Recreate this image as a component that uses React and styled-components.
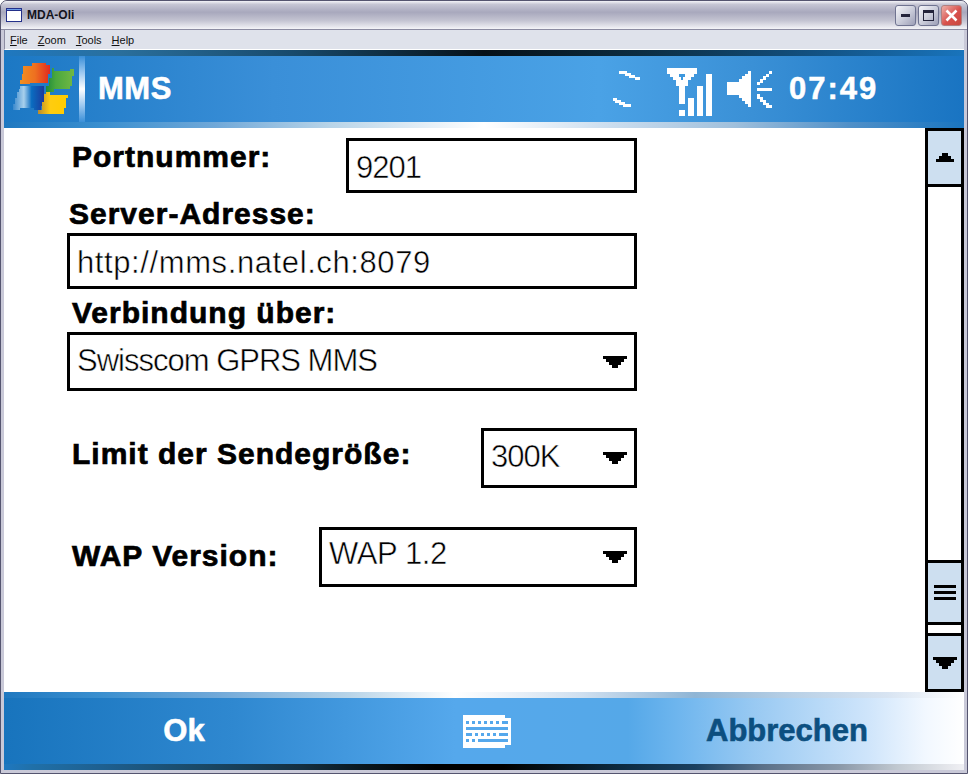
import styled, { createGlobalStyle } from "styled-components";

const Global = createGlobalStyle`
  html, body { margin: 0; padding: 0; background: #fff; }
  body { font-family: "Liberation Sans", Arial, sans-serif; }
`;

const Window = styled.div`
  width: 968px;
  height: 774px;
  box-sizing: border-box;
  display: flex;
  flex-direction: column;
  background: #c9c9d8;
  border: 1px solid #55556f;
  border-radius: 7px 7px 0 0;
  padding: 0 2px 2px;
  overflow: hidden;
`;

const TitleBar = styled.div`
  height: 28px;
  flex: none;
  margin: 0 -2px;
  padding: 0 5px 0 5px;
  display: flex;
  align-items: center;
  gap: 5px;
  background: linear-gradient(#f4f4f8 0, #c6c6d4 12%, #a8a8bd 40%, #c4c4d2 70%, #f4f4f8 100%);
  border-bottom: 1px solid #8c8ca2;
`;

const TitleText = styled.span`
  font-size: 12px;
  font-weight: bold;
  color: #14141c;
`;

const Caption = styled.div`
  margin-left: auto;
  display: flex;
  gap: 2px;
`;

const CaptionButton = styled.div`
  width: 21px;
  height: 21px;
  box-sizing: border-box;
  border: 1px solid ${({ $close }) => ($close ? "#b08080" : "#6f7390")};
  border-radius: 3px;
  background: ${({ $close }) =>
    $close
      ? "linear-gradient(135deg, #eeb0a8, #d8504c 55%, #c84840)"
      : "linear-gradient(135deg, #f6f6fa, #c8cad8 55%, #9c9eb6)"};
  display: flex;
  align-items: center;
  justify-content: center;
`;

const MenuBar = styled.div`
  height: 19px;
  flex: none;
  margin: 0 1px;
  padding-left: 5px;
  display: flex;
  align-items: center;
  gap: 10px;
  background: #dfe2eb;
  border-bottom: 1px solid #fff;
  font-size: 11px;
  color: #111;
  border-left: 1px solid #8c8ca2;
`;

const MenuItem = styled.span`
  &::first-letter { text-decoration: underline; }
`;

const Screen = styled.div`
  margin: 0 1px;
  width: 960px;
  height: 720px;
  display: flex;
  flex-direction: column;
  background: #fff;
`;

const BlueBar = styled.div`
  height: 78px;
  flex: none;
  display: flex;
  flex-direction: column;
`;

const Strip = styled.div`
  height: 6px;
  flex: none;
  background: ${({ $bg }) => $bg};
`;

const Band = styled.div`
  height: 66px;
  flex: none;
  display: flex;
  background: ${({ $bg }) => $bg};
`;

const Separator = styled.div`
  width: 6px;
  margin-left: 1px;
  background: linear-gradient(#3a8fd8, #9cc8f0 25%, #fff 50%, #9cc8f0 75%, #3a8fd8);
`;

const HeaderTitle = styled.div`
  margin-left: 13px;
  align-self: center;
  font-size: 31px;
  font-weight: bold;
  letter-spacing: 0.5px;
  color: #fff;
  -webkit-text-stroke: 0.6px #fff;
`;

const Status = styled.div`
  margin-left: auto;
  padding-right: 87px;
  display: flex;
  align-items: center;
  color: #fff;
`;

const IconGap = styled.span`
  width: ${({ $width }) => $width}px;
`;

const Clock = styled.div`
  margin-left: 17px;
  width: 88px;
  font-size: 31px;
  font-weight: bold;
  letter-spacing: 2px;
  white-space: nowrap;
  -webkit-text-stroke: 0.5px #fff;
`;

const Main = styled.div`
  flex: 1;
  display: flex;
  min-height: 0;
`;

const Form = styled.div`
  width: 570px;
  margin-left: 63px;
  padding-top: 10px;
  display: flex;
  flex-direction: column;
`;

const Row = styled.div`
  display: flex;
  align-items: flex-start;
  justify-content: space-between;
  margin-top: ${({ $top }) => $top || 0}px;
`;

const Label = styled.div`
  font-size: 30px;
  font-weight: bold;
  letter-spacing: ${({ $spacing }) => $spacing ?? 1}px;
  color: #000;
  white-space: nowrap;
  height: ${({ $height }) => $height}px;
  line-height: ${({ $line, $height }) => $line || $height}px;
  margin-left: ${({ $indent }) => $indent ?? 5}px;
  -webkit-text-stroke: 0.7px #000;
`;

const Box = styled.div`
  box-sizing: border-box;
  width: ${({ $width }) => ($width ? `${$width}px` : "100%")};
  height: ${({ $height }) => $height}px;
  border: 3px solid #000;
  padding: 0 7px;
  display: flex;
  align-items: center;
  justify-content: space-between;
`;

// thin white outline keeps the big regular face close to the 1px-doubled device font
const BoxText = styled.span`
  font-size: 31px;
  color: #000;
  white-space: nowrap;
  letter-spacing: ${({ $spacing }) => $spacing || 0}px;
  padding-top: ${({ $down }) => $down || 0}px;
  padding-bottom: ${({ $up }) => $up || 0}px;
  -webkit-text-stroke: 0.5px #fff;
`;

const ScrollBar = styled.div`
  width: 39px;
  margin-left: auto;
  display: flex;
  flex-direction: column;
`;

const ScrollButton = styled.div`
  box-sizing: border-box;
  flex: none;
  height: ${({ $height }) => $height}px;
  border: 3px solid #000;
  background: #cddff0;
  display: flex;
  align-items: center;
  justify-content: center;
`;

const Track = styled.div`
  flex: 1;
  display: flex;
  flex-direction: column;
  justify-content: flex-end;
  border-left: 3px solid #000;
  border-right: 3px solid #000;
`;

const Thumb = styled(ScrollButton)`
  margin: 0 -3px 8px;
`;

const SoftKeys = styled.div`
  height: 66px;
  flex: none;
  display: grid;
  grid-template-columns: 360px 246px 354px;
  align-items: center;
  justify-items: center;
  background: linear-gradient(90deg, #1874bd 0, #2f88d0 24%, #55a8ec 47%, #55a8e8 65%, #6db5ee 70%, #98c9f2 78%, #cfe5fb 90%, #f2f8ff 96%, #fff 100%);
`;

const SoftKey = styled.div`
  font-size: 31px;
  font-weight: bold;
  color: ${({ $color }) => $color};
  -webkit-text-stroke: 0.6px ${({ $color }) => $color};
`;

const Pixel = styled.svg`
  display: block;
  flex: none;
  shape-rendering: crispEdges;
`;

const LogoMark = styled(Pixel)`
  margin-left: 4px;
`;

function WinIcon() {
  return (
    <Pixel width="16" height="14" viewBox="0 0 16 14">
      <rect width="16" height="14" fill="#24308a" />
      <rect x="1" y="3" width="14" height="10" fill="#fff" />
      <rect x="1" y="1" width="14" height="1" fill="#6f9fe8" />
    </Pixel>
  );
}

function Logo() {
  return (
    <LogoMark width="70" height="66" viewBox="0 0 70 66">
      <defs>
        <linearGradient id="red" x1="0" x2="1" y1="0" y2="0">
          <stop offset="0" stopColor="#f09020" />
          <stop offset="0.5" stopColor="#ee7020" />
          <stop offset="1" stopColor="#e02a20" />
        </linearGradient>
        <linearGradient id="green" x1="0" x2="1" y1="0" y2="0">
          <stop offset="0" stopColor="#1f8a3a" />
          <stop offset="0.35" stopColor="#4aa83e" />
          <stop offset="1" stopColor="#72b844" />
        </linearGradient>
        <linearGradient id="blue" x1="0" x2="1" y1="0" y2="0">
          <stop offset="0" stopColor="#3a88cc" />
          <stop offset="0.35" stopColor="#a8d0ec" />
          <stop offset="0.6" stopColor="#0a6cc0" />
          <stop offset="1" stopColor="#1c3a9c" />
        </linearGradient>
        <linearGradient id="yellow" x1="0" x2="1" y1="0" y2="0">
          <stop offset="0" stopColor="#b88a30" />
          <stop offset="0.4" stopColor="#ffcc10" />
          <stop offset="1" stopColor="#ffcc00" />
        </linearGradient>
      </defs>
      <path fill="url(#red)" d="M15 10 H24 V7 H38 V9 H42 V18 H40 V27 H22 V28 H12 V24 H14 V18 H15 Z" />
      <path fill="url(#green)" d="M44 12 H46 V15 H62 V13 H66 V20 H64 V30 H62 V33 H46 V36 H38 V30 H41 V22 H44 Z" />
      <path fill="url(#blue)" d="M12 30 H36 V50 H33 V54 H26 V52 H12 V54 H5 V48 H7 V42 H9 V36 H11 Z" />
      <path fill="url(#yellow)" d="M38 36 H42 V39 H60 V42 H58 V52 H56 V58 H30 V54 H34 V46 H36 V38 H38 Z" />
    </LogoMark>
  );
}

function SyncIcon() {
  return (
    <Pixel width="27" height="66" viewBox="0 0 27 66" fill="#fff">
      <path d="M6 15 H14 V17 H18 V19 H22 V21 H27 V24 H22 V22 H16 V20 H12 V18 H6 Z" />
      <path d="M0 42 H4 V44 H8 V46 H12 V48 H18 V51 H10 V49 H6 V47 H2 V45 H0 Z" />
    </Pixel>
  );
}

function SignalIcon() {
  return (
    <Pixel width="45" height="66" viewBox="0 0 45 66" fill="#fff">
      <path d="M0 12 H30 V18 H27 V21 H24 V24 H21 V30 H18 V48 H12 V30 H9 V24 H6 V21 H3 V18 H0 Z" />
      <path d="M12 18 H18 V21 H16 V24 H14 V21 H12 Z" fill="#3e98de" />
      <rect x="12" y="54" width="6" height="6" />
      <rect x="21" y="42" width="6" height="18" />
      <rect x="30" y="30" width="6" height="30" />
      <rect x="39" y="18" width="6" height="42" />
    </Pixel>
  );
}

function SpeakerIcon() {
  return (
    <Pixel width="45" height="66" viewBox="0 0 45 66" fill="#fff">
      <path d="M0 26 H12 V23 H15 V20 H18 V18 H21 V15 H24 V51 H21 V48 H18 V45 H15 V42 H12 V39 H0 Z" />
      <path d="M30 26 H33 V23 H36 V20 H39 V18 H42 V15 H45 V18 H42 V21 H39 V24 H36 V27 H33 V29 H30 Z" />
      <rect x="30" y="32" width="15" height="3" />
      <path d="M30 38 H33 V41 H36 V44 H39 V47 H42 V49 H45 V52 H39 V49 H36 V46 H33 V43 H30 Z" />
    </Pixel>
  );
}

function KeyboardIcon() {
  const top = [0, 1, 2, 3, 4, 5];
  return (
    <Pixel width="48" height="33" viewBox="0 0 48 33">
      <path fill="#fff" d="M0 0 H42 V3 H48 V30 H42 V33 H0 Z" />
      <g fill="#55a8ec">
        {top.map((i) => (
          <rect key={i} x={3 + i * 6} y="6" width="3" height="3" />
        ))}
        <rect x="39" y="6" width="6" height="3" />
        <rect x="3" y="12" width="42" height="3" />
        <rect x="3" y="18" width="6" height="3" />
        <rect x="12" y="18" width="3" height="3" />
        <rect x="18" y="18" width="3" height="3" />
        <rect x="24" y="18" width="3" height="3" />
        <rect x="30" y="18" width="3" height="3" />
        <rect x="36" y="18" width="9" height="3" />
        <rect x="3" y="24" width="3" height="3" />
        <rect x="9" y="24" width="3" height="3" />
        <rect x="15" y="24" width="30" height="3" />
      </g>
    </Pixel>
  );
}

function DownArrow() {
  return (
    <Pixel width="24" height="12" viewBox="0 0 24 12">
      <path d="M0 0 H24 V3 H21 V6 H18 V9 H15 V12 H9 V9 H6 V6 H3 V3 H0 Z" />
    </Pixel>
  );
}

function UpArrow() {
  return (
    <Pixel width="18" height="9" viewBox="0 0 18 9">
      <path d="M6 0 H12 V3 H15 V6 H18 V9 H0 V6 H3 V3 H6 Z" />
    </Pixel>
  );
}

function Grip() {
  return (
    <Pixel width="22" height="15" viewBox="0 0 22 15">
      <rect width="22" height="3" />
      <rect y="6" width="22" height="3" />
      <rect y="12" width="22" height="3" />
    </Pixel>
  );
}

export default function App() {
  return (
    <>
      <Global />
      <Window>
        <TitleBar>
          <WinIcon />
          <TitleText>MDA-Oli</TitleText>
          <Caption>
            <CaptionButton>
              <Pixel width="9" height="3" viewBox="0 0 9 3">
                <rect width="9" height="3" fill="#23233a" />
              </Pixel>
            </CaptionButton>
            <CaptionButton>
              <Pixel width="11" height="11" viewBox="0 0 11 11">
                <path fill="#23233a" d="M0 0 H11 V11 H0 Z M1 3 V10 H10 V3 Z" fillRule="evenodd" />
              </Pixel>
            </CaptionButton>
            <CaptionButton $close>
              <svg width="13" height="13" viewBox="0 0 13 13">
                <path d="M1.5 1.5 L11.5 11.5 M11.5 1.5 L1.5 11.5" stroke="#fff" strokeWidth="2.6" />
              </svg>
            </CaptionButton>
          </Caption>
        </TitleBar>
        <MenuBar>
          <MenuItem>File</MenuItem>
          <MenuItem>Zoom</MenuItem>
          <MenuItem>Tools</MenuItem>
          <MenuItem>Help</MenuItem>
        </MenuBar>
        <Screen>
          <BlueBar>
            <Strip $bg="linear-gradient(90deg, #1f78c0 0, #2a6f9c 12%, #184a6c 30%, #061018 50%, #0c2c40 66%, #125080 84%, #1974bc 100%)" />
            <Band $bg="linear-gradient(90deg, #1c78c4 0, #3a8fd8 28%, #4aa2e6 62%, #3a90d6 78%, #1974c2 100%)">
              <Logo />
              <Separator />
              <HeaderTitle>MMS</HeaderTitle>
              <Status>
                <SyncIcon />
                <IconGap $width={27} />
                <SignalIcon />
                <IconGap $width={15} />
                <SpeakerIcon />
                <Clock>07:49</Clock>
              </Status>
            </Band>
            <Strip $bg="linear-gradient(90deg, #1f78c0 0, #3a8fcf 10%, #70a8d8 22%, #b8d4e8 34%, #fff 50%, #cfe0f0 62%, #a0c0dc 76%, #5090c8 88%, #1a75c0 100%)" />
          </BlueBar>
          <Main>
            <Form>
              <Row>
                <Label $height={38}>Portnummer:</Label>
                <Box $width={291} $height={55}>
                  <BoxText $spacing={-1} $down={4}>9201</BoxText>
                </Box>
              </Row>
              <Label $indent={2} $height={40} $line={42}>Server-Adresse:</Label>
              <Box $height={56}>
                <BoxText $spacing={0.6} $down={4}>http://mms.natel.ch:8079</BoxText>
              </Box>
              <Label $height={43} $line={48}>Verbindung über:</Label>
              <Box $height={59}>
                <BoxText $spacing={-1} $up={2}>Swisscom GPRS MMS</BoxText>
                <DownArrow />
              </Box>
              <Row $top={37}>
                <Label $height={52}>Limit der Sendegröße:</Label>
                <Box $width={156} $height={60}>
                  <BoxText $spacing={-1} $up={2}>300K</BoxText>
                  <DownArrow />
                </Box>
              </Row>
              <Row $top={39}>
                <Label $height={58}>WAP Version:</Label>
                <Box $width={318} $height={60}>
                  <BoxText $spacing={-0.4} $up={6}>WAP 1.2</BoxText>
                  <DownArrow />
                </Box>
              </Row>
            </Form>
            <ScrollBar>
              <ScrollButton $height={59}>
                <UpArrow />
              </ScrollButton>
              <Track>
                <Thumb $height={65}>
                  <Grip />
                </Thumb>
              </Track>
              <ScrollButton $height={59}>
                <DownArrow />
              </ScrollButton>
            </ScrollBar>
          </Main>
          <BlueBar>
            <Strip $bg="linear-gradient(90deg, #1f78c0 0, #3a8fcf 10%, #70a8d8 22%, #b8d4e8 36%, #fff 47%, #d0e0f0 60%, #8fb5d5 72%, #b8d0e6 82%, #d8e4f2 92%, #fff 100%)" />
            <SoftKeys>
              <SoftKey $color="#fff">Ok</SoftKey>
              <KeyboardIcon />
              <SoftKey $color="#0c4f80">Abbrechen</SoftKey>
            </SoftKeys>
            <Strip $bg="linear-gradient(90deg, #1f78c0 0, #2070a8 3%, #1e6090 10%, #1a4a68 20%, #142f40 31%, #0a1820 37%, #000 45%, #000 52%, #0c2a40 64%, #1a4060 72%, #5a7088 79%, #8a98a8 87%, #c0c8d0 93%, #f0f0f4 100%)" />
          </BlueBar>
        </Screen>
      </Window>
    </>
  );
}
